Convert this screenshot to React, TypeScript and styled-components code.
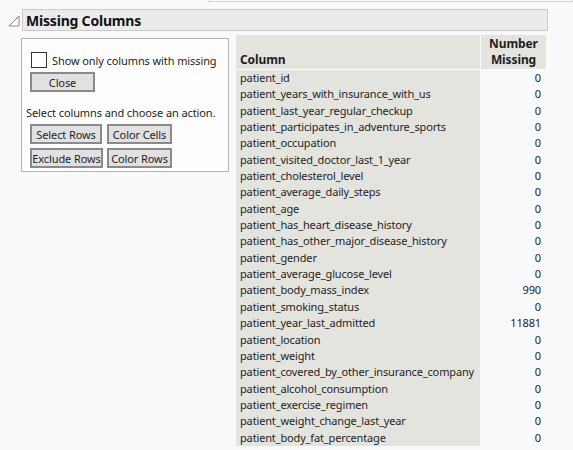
import React from 'react'
import styled, { createGlobalStyle } from 'styled-components'

const GlobalStyle = createGlobalStyle`
  html, body {
    margin: 0;
    padding: 0;
    background: #f9f9f9;
    font-family: "Noto Sans", "Open Sans", sans-serif;
    color: #1e1e1e;
  }
`

const Page = styled.div`
  width: 573px;
  height: 450px;
  overflow: hidden;
  display: flex;
  flex-direction: column;
`

const TopStrip = styled.div`
  margin-left: 208px;
  height: 1px;
  border: 1px solid #d4d4d4;
  border-top: none;
  background: #fbfbfb;
`

const Outline = styled.div`
  display: flex;
  flex-direction: column;
  padding: 7px 0 0 8px;
`

const TitleRow = styled.div`
  display: flex;
  align-items: center;
  gap: 2px;
`

const Disclosure = styled.svg`
  width: 12px;
  height: 12px;
  flex: none;
  margin-top: 2px;
`

const TitleBar = styled.div`
  width: 521px;
  height: 20px;
  border: 1px solid #cbcbcb;
  background: #ebebeb;
  display: flex;
  align-items: center;
  padding: 1px 0 0 3px;
  box-sizing: content-box;
  height: 19px;
  font-size: 14px;
  letter-spacing: -0.2px;
  font-weight: 700;
  color: #111;
`

const Body = styled.div`
  display: flex;
  align-items: flex-start;
  gap: 7px;
  padding-left: 13px;
  margin-top: 4px;
`

const Panel = styled.div`
  margin-top: 3px;
  width: 202px;
  height: 132px;
  border: 1px solid #b4b4b4;
  background: #fdfdfd;
  display: flex;
  flex-direction: column;
  padding: 0 0 0 4px;
  font-size: 11px;
  letter-spacing: -0.1px;
  white-space: nowrap;
`

const CheckRow = styled.label`
  display: flex;
  align-items: center;
  gap: 5px;
  margin: 13px 0 0 5px;
`

const Box = styled.span`
  width: 14px;
  height: 14px;
  border: 1px solid #333;
  background: #fff;
  flex: none;
`

const Button = styled.button<{ w: number }>`
  width: ${p => p.w}px;
  height: 20px;
  box-sizing: border-box;
  border: 2px solid #8a8a8a;
  background: #e1e1e1;
  font-family: inherit;
  font-size: 11px;
  letter-spacing: -0.1px;
  color: #1e1e1e;
  padding: 0;
  display: flex;
  align-items: center;
  justify-content: center;
  white-space: nowrap;
`

const CloseRow = styled.div`
  margin: 4px 0 0 4px;
`

const Hint = styled.div`
  margin: 13px 0 0 0;
  line-height: 16px;
`

const ButtonGrid = styled.div`
  display: grid;
  grid-template-columns: 73px 65px;
  column-gap: 4px;
  row-gap: 4px;
  margin: 3px 0 0 4px;
`

const Table = styled.div`
  display: grid;
  grid-template-columns: 244px 65px;
  column-gap: 1px;
  font-size: 11px;
  letter-spacing: -0.15px;
`

const HeadCell = styled.div<{ right?: boolean }>`
  background: #e4e4df;
  height: 33px;
  display: flex;
  align-items: flex-end;
  justify-content: ${p => (p.right ? 'center' : 'flex-start')};
  text-align: ${p => (p.right ? 'center' : 'left')};
  padding: 0 4px 1px 4px;
  font-weight: 700;
  font-size: 12px;
  letter-spacing: -0.1px;
  line-height: 16px;
  border-bottom: 1px solid #fff;
`

const NameCell = styled.div`
  background: #e4e4df;
  height: 16.35px;
  line-height: 16.35px;
  padding-left: 4px;
  white-space: nowrap;
`

const CountCell = styled.div`
  height: 16.35px;
  line-height: 16.35px;
  text-align: right;
  padding-right: 5px;
  color: #1d2040;
`

const rows: [string, number][] = [
  ['patient_id', 0],
  ['patient_years_with_insurance_with_us', 0],
  ['patient_last_year_regular_checkup', 0],
  ['patient_participates_in_adventure_sports', 0],
  ['patient_occupation', 0],
  ['patient_visited_doctor_last_1_year', 0],
  ['patient_cholesterol_level', 0],
  ['patient_average_daily_steps', 0],
  ['patient_age', 0],
  ['patient_has_heart_disease_history', 0],
  ['patient_has_other_major_disease_history', 0],
  ['patient_gender', 0],
  ['patient_average_glucose_level', 0],
  ['patient_body_mass_index', 990],
  ['patient_smoking_status', 0],
  ['patient_year_last_admitted', 11881],
  ['patient_location', 0],
  ['patient_weight', 0],
  ['patient_covered_by_other_insurance_company', 0],
  ['patient_alcohol_consumption', 0],
  ['patient_exercise_regimen', 0],
  ['patient_weight_change_last_year', 0],
  ['patient_body_fat_percentage', 0],
]

export default function App() {
  return (
    <Page>
      <GlobalStyle />
      <TopStrip />
      <Outline>
        <TitleRow>
          <Disclosure viewBox="0 0 12 12">
            <path d="M11 1 L11 11 L1 11 Z" fill="#fff" stroke="#8c8c8c" strokeWidth="1" />
          </Disclosure>
          <TitleBar>Missing Columns</TitleBar>
        </TitleRow>
        <Body>
          <Panel>
            <CheckRow>
              <Box />
              Show only columns with missing
            </CheckRow>
            <CloseRow>
              <Button w={65}>Close</Button>
            </CloseRow>
            <Hint>Select columns and choose an action.</Hint>
            <ButtonGrid>
              <Button w={72}>Select Rows</Button>
              <Button w={65}>Color Cells</Button>
              <Button w={73}>Exclude Rows</Button>
              <Button w={65}>Color Rows</Button>
            </ButtonGrid>
          </Panel>
          <Table>
            <HeadCell>Column</HeadCell>
            <HeadCell right>Number<br />Missing</HeadCell>
            {rows.map(([name, n]) => (
              <React.Fragment key={name}>
                <NameCell>{name}</NameCell>
                <CountCell>{n}</CountCell>
              </React.Fragment>
            ))}
          </Table>
        </Body>
      </Outline>
    </Page>
  )
}
